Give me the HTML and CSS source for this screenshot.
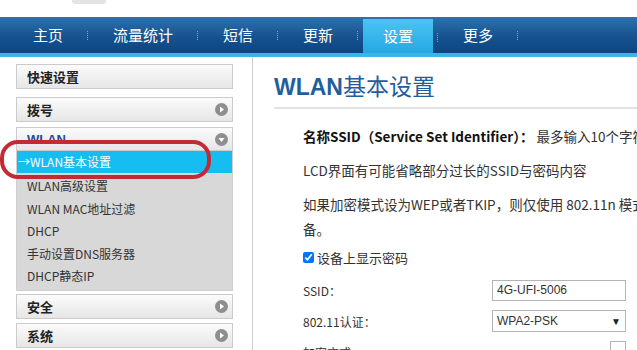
FILE: index.html
```html
<!DOCTYPE html>
<html lang="zh-CN">
<head>
    <meta charset="UTF-8">
    <meta name="viewport" content="width=device-width, initial-scale=1.0">
    <title>WLAN基本设置</title>
    <link rel="stylesheet" href="styles.css">
</head>
<body>
    <header class="top">
        <div class="logo"></div>
    </header>
    <nav class="mainnav">
        <a href="#">主页</a>
        <a href="#">流量统计</a>
        <a href="#">短信</a>
        <a href="#">更新</a>
        <a href="#" class="active">设置</a>
        <a href="#">更多</a>
    </nav>

    <div class="page">
        <aside class="side">
            <div class="side-btn first">快速设置</div>
            <div class="side-btn">拨号 <span class="dot"><svg width="13" height="13" viewBox="0 0 13 13"><circle cx="6.5" cy="6.5" r="6.5" fill="#8e8e8e"/><path d="M5 3.5 L9 6.5 L5 9.5 Z" fill="#fff"/></svg></span></div>
            <div class="side-btn open">WLAN <span class="dot"><svg width="13" height="13" viewBox="0 0 13 13"><circle cx="6.5" cy="6.5" r="6.5" fill="#8e8e8e"/><path d="M3.5 5 L9.5 5 L6.5 9 Z" fill="#fff"/></svg></span></div>
            <ul class="submenu">
                <li class="current">→WLAN基本设置</li>
                <li>WLAN高级设置</li>
                <li>WLAN MAC地址过滤</li>
                <li>DHCP</li>
                <li>手动设置DNS服务器</li>
                <li>DHCP静态IP</li>
            </ul>
            <div class="side-btn after">安全 <span class="dot"><svg width="13" height="13" viewBox="0 0 13 13"><circle cx="6.5" cy="6.5" r="6.5" fill="#8e8e8e"/><path d="M5 3.5 L9 6.5 L5 9.5 Z" fill="#fff"/></svg></span></div>
            <div class="side-btn">系统 <span class="dot"><svg width="13" height="13" viewBox="0 0 13 13"><circle cx="6.5" cy="6.5" r="6.5" fill="#8e8e8e"/><path d="M5 3.5 L9 6.5 L5 9.5 Z" fill="#fff"/></svg></span></div>
            <!-- red marker drawn on the screenshot -->
            <div class="marker"></div>
        </aside>

        <main class="content">
            <h1><b>WLAN</b>基本设置</h1>
            <p class="line"><strong>名称SSID（Service Set Identifier）：</strong> 最多输入10个字符，只能包含字母数字</p>
            <p class="line">LCD界面有可能省略部分过长的SSID与密码内容</p>
            <p class="line">如果加密模式设为WEP或者TKIP，则仅使用 802.11n 模式的设<br>备。</p>
            <label class="check"><input type="checkbox" checked> 设备上显示密码</label>
            <div class="row">
                <span>SSID：</span>
                <input type="text" value="4G-UFI-5006">
            </div>
            <div class="row">
                <span>802.11认证：</span>
                <div class="select">WPA2-PSK <i>▼</i></div>
            </div>
            <div class="row">
                <span>加密方式：</span>
                <div class="select small"><i>▼</i></div>
            </div>
        </main>
    </div>
</body>
</html>
```

FILE: styles.css
```css
body { margin: 0; font-family: "Liberation Sans", "Noto Sans CJK SC", sans-serif; color: #333; background: #fff; overflow: hidden; width: 637px; height: 350px; }

.top { height: 17px; }
.logo { margin-left: 72px; width: 34px; height: 4px; background: #e4e4e4; border-radius: 0 0 3px 3px; }

.mainnav { height: 36px; border-bottom: 4px solid #39b6e6; background: linear-gradient(#2f72ad, #15528f 55%, #0e4581); display: flex; padding-left: 8px; }
.mainnav a { position: relative; color: #fff; text-decoration: none; font-size: 15px; line-height: 36px; padding: 0 20px; margin: 0 5px; font-family: "Noto Sans CJK SC", sans-serif; }
.mainnav a::after { content: ""; position: absolute; right: -5px; top: 14px; height: 9px; border-right: 1px dotted #7fa6cc; }
.mainnav a.active { background: linear-gradient(#4cc4f2, #25a8e4); margin-top: 2px; line-height: 34px; }

.page { display: flex; height: 300px; }

.side { position: relative; flex: none; width: 217px; margin: 0 19px 0 16px; padding-top: 7px; font-family: "Noto Sans CJK SC", sans-serif; }
.side-btn { box-sizing: border-box; height: 25px; border: 1px solid #cbcbcb; background: linear-gradient(#fbfbfb, #e6e6e6); font-size: 13px; font-weight: bold; color: #222; padding-left: 10px; display: flex; justify-content: space-between; align-items: center; margin-bottom: 8px; }
.side-btn.open { margin-top: -3px; margin-bottom: 0; height: 24px; color: #1f4f9a; font-family: "Liberation Sans", sans-serif; }
.side-btn.after { margin-top: 3px; margin-bottom: 4px; }
.dot { display: flex; margin-right: 4px; }

.submenu { list-style: none; margin: 0; padding: 0 0 2px; background: #d8d8d8; border: 1px solid #cfcfcf; border-top: none; }
.submenu li { height: 22.5px; line-height: 22px; font-size: 12px; padding-left: 10px; color: #333; }
.submenu li.current { background: #16bdf0; color: #fff; padding-left: 1px; height: 22px; margin-bottom: 2px; }

.marker { position: absolute; left: -16px; top: 83px; width: 203px; height: 31px; border: 4px solid #c52a33; border-radius: 18px; }

.content { flex: 1; min-width: 0; overflow: hidden; border-left: 1px solid #cfcfcf; padding-left: 21px; white-space: nowrap; }
.content h1 { margin: 12px 0 0; font-size: 23px; font-weight: normal; color: #1f5f9f; font-family: "Noto Sans CJK SC", sans-serif; line-height: 32px; padding-bottom: 4px; border-bottom: 2px solid #e2e2e2; }
.content h1 b { font-family: "Liberation Sans", sans-serif; font-weight: bold; }

.line { margin: 0 0 0 29px; font-size: 13.5px; line-height: 25px; font-family: "Noto Sans CJK SC", sans-serif; color: #333; }
.line:first-of-type { margin-top: 15px; font-size: 13.5px; }
.line + .line { margin-top: 9px; }
.line strong { color: #111; }

.check { display: flex; align-items: center; gap: 3px; margin: 6px 0 0 29px; font-size: 13px; font-family: "Noto Sans CJK SC", sans-serif; }
.check input { margin: 0; width: 11px; height: 11px; }

.row { display: grid; grid-template-columns: 189px 134px; align-items: center; margin-left: 29px; height: 22px; margin-top: 12px; font-size: 12px; }
.row + .row { margin-top: 9px; }
.row span { font-family: "Noto Sans CJK SC", sans-serif; }
.row input { box-sizing: border-box; width: 134px; height: 21px; border: 1px solid #b4b4b4; padding: 0 4px; font: 12px "Liberation Sans", sans-serif; color: #333; }
.select { box-sizing: border-box; height: 22px; border: 1px solid #b4b4b4; padding: 0 4px; display: flex; justify-content: space-between; align-items: center; font-size: 12px; }
.select i { font-style: normal; font-size: 10px; color: #222; }
.select.small { width: 16px; margin-left: 118px; padding: 0 3px; }
```
